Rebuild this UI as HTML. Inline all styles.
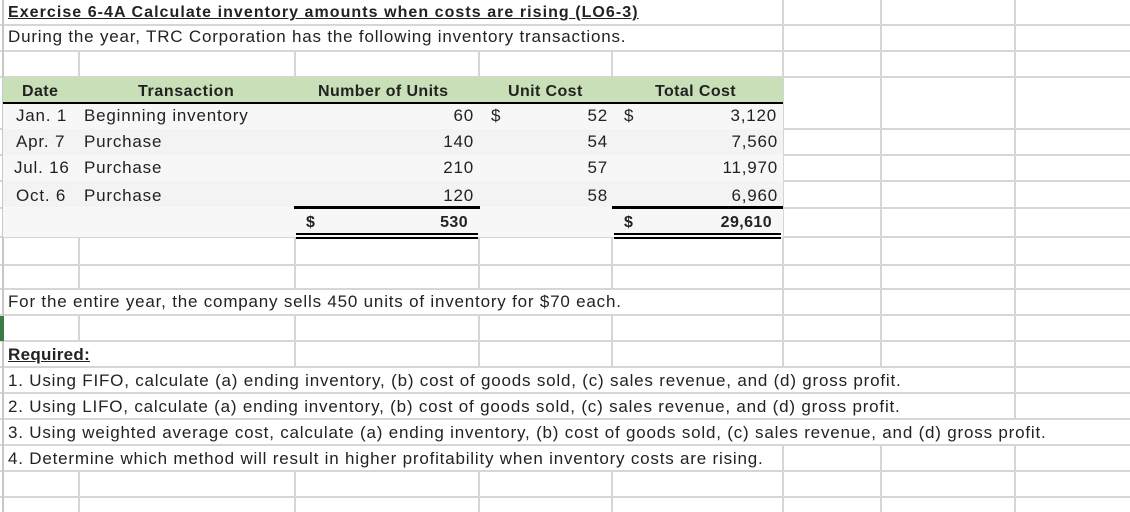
<!DOCTYPE html>
<html><head><meta charset="utf-8"><style>
body{margin:0;width:1130px;height:512px;background:#fff;overflow:hidden;position:relative;font-family:"Liberation Sans",Arial,sans-serif;color:#222;}
.h{position:absolute;left:0;width:1130px;height:2px;background:#d6d6d6}
.v{position:absolute;width:2px;background:#d6d6d6}
.t{position:absolute;font-size:17px;white-space:nowrap;line-height:20px;letter-spacing:0.8px}
.r{text-align:right}
.b{font-weight:bold}
.k{position:absolute;background:#000}
.hd{font-size:16px;letter-spacing:0.4px}
</style></head><body>
<div class="h" style="top:24px"></div><div class="h" style="top:50px"></div><div class="h" style="top:76px"></div>
<div class="h" style="top:128px"></div><div class="h" style="top:154px"></div><div class="h" style="top:180px"></div>
<div class="h" style="top:207px"></div><div class="h" style="top:236px"></div><div class="h" style="top:264px"></div>
<div class="h" style="top:288px"></div><div class="h" style="top:314px"></div><div class="h" style="top:340px"></div>
<div class="h" style="top:366px"></div><div class="h" style="top:392px"></div><div class="h" style="top:418px"></div>
<div class="h" style="top:444px"></div><div class="h" style="top:470px"></div><div class="h" style="top:496px"></div>
<div class="v" style="left:782px;top:0;height:367px"></div><div class="v" style="left:782px;top:445px;height:67px"></div>
<div class="v" style="left:880px;top:0;height:367px"></div><div class="v" style="left:880px;top:445px;height:67px"></div>
<div class="v" style="left:1014px;top:0;height:419px"></div><div class="v" style="left:1014px;top:445px;height:67px"></div>
<div class="v" style="left:2px;top:0;height:512px;background:#c8c8c8"></div>
<div style="position:absolute;left:0;top:316px;width:4px;height:25px;background:#3d7a45"></div>
<div class="v" style="left:78px;top:51px;height:26px"></div><div class="v" style="left:294px;top:51px;height:26px"></div><div class="v" style="left:478px;top:51px;height:26px"></div><div class="v" style="left:611px;top:51px;height:26px"></div>
<div class="v" style="left:78px;top:237px;height:52px"></div><div class="v" style="left:294px;top:237px;height:52px"></div><div class="v" style="left:478px;top:237px;height:52px"></div><div class="v" style="left:611px;top:237px;height:52px"></div>
<div class="v" style="left:78px;top:315px;height:26px"></div><div class="v" style="left:294px;top:315px;height:52px"></div><div class="v" style="left:478px;top:315px;height:52px"></div><div class="v" style="left:611px;top:315px;height:52px"></div>
<div class="v" style="left:78px;top:471px;height:41px"></div><div class="v" style="left:294px;top:471px;height:41px"></div><div class="v" style="left:478px;top:471px;height:41px"></div><div class="v" style="left:611px;top:471px;height:41px"></div>
<div style="position:absolute;left:3px;top:77px;width:780px;height:26px;background:#c9dfb7"></div>
<div style="position:absolute;left:3px;top:103px;width:780px;height:134px;background:#f7f7f7"></div>
<div style="position:absolute;left:3px;top:129px;width:780px;height:26px;background:#f3f3f3"></div>
<div style="position:absolute;left:3px;top:181px;width:780px;height:26px;background:#f3f3f3"></div>
<div class="k" style="left:3px;top:102px;width:780px;height:2px"></div>
<div class="k" style="left:294px;top:206px;width:186px;height:3px"></div>
<div class="k" style="left:612px;top:206px;width:171px;height:3px"></div>
<div class="k" style="left:296px;top:233px;width:182px;height:2px"></div>
<div class="k" style="left:296px;top:237px;width:182px;height:2px"></div>
<div class="k" style="left:614px;top:233px;width:167px;height:2px"></div>
<div class="k" style="left:614px;top:237px;width:167px;height:2px"></div>
<div class="t b" style="left:8px;top:3px;font-size:16px;text-decoration:underline;letter-spacing:1.05px">Exercise 6-4A Calculate inventory amounts when costs are rising (LO6-3)</div>
<div class="t" style="left:8px;top:27px">During the year, TRC Corporation has the following inventory transactions.</div>
<div class="t b hd" style="left:22px;top:82px">Date</div>
<div class="t b hd" style="left:138px;top:82px;letter-spacing:0.6px">Transaction</div>
<div class="t b hd" style="left:318px;top:82px">Number of Units</div>
<div class="t b hd" style="left:508px;top:82px">Unit Cost</div>
<div class="t b hd" style="left:655px;top:82px">Total Cost</div>
<div class="t" style="left:16px;top:106px">Jan. 1</div><div class="t" style="left:84px;top:106px">Beginning inventory</div>
<div class="t" style="left:16px;top:132px">Apr. 7</div><div class="t" style="left:84px;top:132px">Purchase</div>
<div class="t" style="left:14px;top:158px">Jul. 16</div><div class="t" style="left:84px;top:158px">Purchase</div>
<div class="t" style="left:16px;top:186px">Oct. 6</div><div class="t" style="left:84px;top:186px">Purchase</div>
<div class="t r" style="right:656px;top:106px">60</div><div class="t" style="left:491px;top:106px">$</div><div class="t r" style="right:522px;top:106px">52</div><div class="t" style="left:624px;top:106px">$</div><div class="t r" style="right:353px;top:106px">3,120</div>
<div class="t r" style="right:656px;top:132px">140</div><div class="t r" style="right:522px;top:132px">54</div><div class="t r" style="right:352px;top:132px">7,560</div>
<div class="t r" style="right:656px;top:158px">210</div><div class="t r" style="right:522px;top:158px">57</div><div class="t r" style="right:352px;top:158px">11,970</div>
<div class="t r" style="right:656px;top:186px">120</div><div class="t r" style="right:522px;top:186px">58</div><div class="t r" style="right:352px;top:186px">6,960</div>
<div class="t b hd" style="left:306px;top:213px">$</div><div class="t r b hd" style="right:662px;top:213px">530</div>
<div class="t b hd" style="left:624px;top:213px">$</div><div class="t r b hd" style="right:358px;top:213px">29,610</div>
<div class="t" style="left:8px;top:292px">For the entire year, the company sells 450 units of inventory for $70 each.</div>
<div class="t b" style="left:8px;top:345px;text-decoration:underline;letter-spacing:0.3px">Required:</div>
<div class="t" style="left:8px;top:371px">1. Using FIFO, calculate (a) ending inventory, (b) cost of goods sold, (c) sales revenue, and (d) gross profit.</div>
<div class="t" style="left:8px;top:397px">2. Using LIFO, calculate (a) ending inventory, (b) cost of goods sold, (c) sales revenue, and (d) gross profit.</div>
<div class="t" style="left:8px;top:423px">3. Using weighted average cost, calculate (a) ending inventory, (b) cost of goods sold, (c) sales revenue, and (d) gross profit.</div>
<div class="t" style="left:8px;top:449px">4. Determine which method will result in higher profitability when inventory costs are rising.</div>
</body></html>
